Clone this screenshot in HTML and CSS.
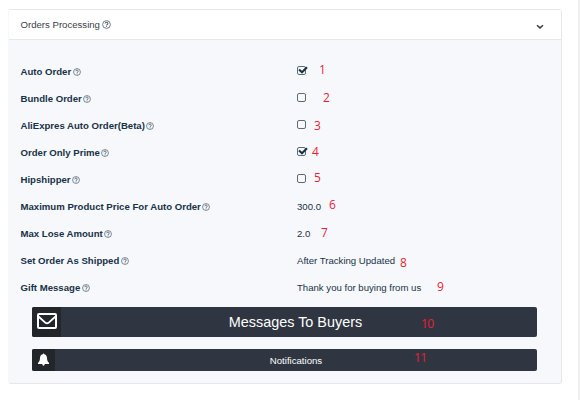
FILE: index.html
```html
<!DOCTYPE html>
<html lang="en">
<head>
    <meta charset="UTF-8">
    <meta name="viewport" content="width=device-width, initial-scale=1.0">
    <title>Orders Processing</title>
    <link rel="stylesheet" href="styles.css">
</head>
<body>
    <svg width="0" height="0" class="sprite">
        <symbol id="help" viewBox="0 0 16 16">
            <circle cx="8" cy="8" r="6.9" fill="none" stroke="currentColor" stroke-width="1.4"/>
            <path d="M5.5 6.4C5.6 3.4 10.5 3.4 10.5 6.3C10.5 8 8.1 8 8.1 9.8M8.1 11V12.6" fill="none" stroke="currentColor" stroke-width="1.8"/>
        </symbol>
    </svg>

    <main class="page">
        <section class="panel">
            <header class="panel-header">
                <h1 class="panel-title">Orders Processing</h1>
                <svg class="help help-large"><use href="#help"/></svg>
                <svg class="chevron" viewBox="0 0 8 6"><path d="M1 1.2L4 3.9L7 1.2" fill="none" stroke="currentColor" stroke-width="1.5"/></svg>
            </header>

            <div class="panel-body">
                <div class="row">
                    <div class="label"><span>Auto Order</span><svg class="help"><use href="#help"/></svg></div>
                    <div class="value"><span class="checkbox"><svg class="tick" viewBox="0 0 10 8"><path d="M1 3.5L4 6.2L9 1.2" fill="none" stroke="currentColor" stroke-width="2.1"/></svg></span></div>
                </div>
                <div class="row">
                    <div class="label"><span>Bundle Order</span><svg class="help"><use href="#help"/></svg></div>
                    <div class="value"><span class="checkbox"></span></div>
                </div>
                <div class="row">
                    <div class="label"><span>AliExpres Auto Order(Beta)</span><svg class="help"><use href="#help"/></svg></div>
                    <div class="value"><span class="checkbox"></span></div>
                </div>
                <div class="row">
                    <div class="label"><span>Order Only Prime</span><svg class="help"><use href="#help"/></svg></div>
                    <div class="value"><span class="checkbox"><svg class="tick" viewBox="0 0 10 8"><path d="M1 3.5L4 6.2L9 1.2" fill="none" stroke="currentColor" stroke-width="2.1"/></svg></span></div>
                </div>
                <div class="row">
                    <div class="label"><span>Hipshipper</span><svg class="help"><use href="#help"/></svg></div>
                    <div class="value"><span class="checkbox"></span></div>
                </div>
                <div class="row">
                    <div class="label"><span>Maximum Product Price For Auto Order</span><svg class="help"><use href="#help"/></svg></div>
                    <div class="value">300.0</div>
                </div>
                <div class="row">
                    <div class="label"><span>Max Lose Amount</span><svg class="help"><use href="#help"/></svg></div>
                    <div class="value">2.0</div>
                </div>
                <div class="row">
                    <div class="label"><span>Set Order As Shipped</span><svg class="help"><use href="#help"/></svg></div>
                    <div class="value">After Tracking Updated</div>
                </div>
                <div class="row">
                    <div class="label"><span>Gift Message</span><svg class="help"><use href="#help"/></svg></div>
                    <div class="value">Thank you for buying from us</div>
                </div>

                <button class="bar bar-messages">
                    <span class="bar-icon"><svg width="20" height="16" viewBox="0 0 20 16"><rect x="1" y="1" width="18" height="14" rx="1" fill="none" stroke="#fff" stroke-width="2"/><path d="M1.5 3.5L8.5 9.8Q10 11 11.5 9.8L18.5 3.5" fill="none" stroke="#fff" stroke-width="1.8"/></svg></span>
                    <span class="bar-text">Messages To Buyers</span>
                </button>
                <button class="bar bar-notifications">
                    <span class="bar-icon"><svg width="11" height="13" viewBox="0 0 11 13"><path d="M5.5 0.2L6.3 1.2C8.4 1.7 8.9 3.2 9 5C9.1 7.4 9.7 8.8 11 9.7V10.9H0V9.7C1.3 8.8 1.9 7.4 2 5C2.1 3.2 2.6 1.7 4.7 1.2ZM4.2 10.9H6.8Q6.6 12.7 5.5 12.7Q4.4 12.7 4.2 10.9Z" fill="#fff"/></svg></span>
                    <span class="bar-text">Notifications</span>
                </button>
            </div>
        </section>
    </main>

    <div class="marks">
        <span class="mark mark-1">1</span>
        <span class="mark mark-2">2</span>
        <span class="mark mark-3">3</span>
        <span class="mark mark-4">4</span>
        <span class="mark mark-5">5</span>
        <span class="mark mark-6">6</span>
        <span class="mark mark-7">7</span>
        <span class="mark mark-8">8</span>
        <span class="mark mark-9">9</span>
        <span class="mark mark-10">10</span>
        <span class="mark mark-11">11</span>
    </div>
</body>
</html>
```
FILE: styles.css
```css
* {
    box-sizing: border-box;
}

body {
    margin: 0;
    background-color: #fff;
    color: #183247;
    font-family: "Liberation Sans", Arial, sans-serif;
    font-size: 9.6px;
}

.sprite {
    display: block;
}

.page {
    width: 580px;
    height: 400px;
    padding: 9px 0 0 8px;
    border-right: 2px solid #f0f0f0;
}

.panel {
    width: 554px;
    height: 375px;
    border: 1px solid #e7e7e9;
    border-left-color: #f7f8fc;
    border-radius: 3px;
    background-color: #f7f8fc;
}

.panel-header {
    display: flex;
    align-items: center;
    height: 30px;
    padding: 0 17.5px 0 11.5px;
    border-bottom: 1px solid #e7e7e9;
    background-color: #fff;
    color: #3a4046;
}

.panel-title {
    margin: 0 2.5px 0 0;
    font-size: 9.6px;
    font-weight: normal;
}

.help {
    width: 8px;
    height: 8px;
    margin: 1px 0 0 1.5px;
    color: #4c5c68;
}

.help-large {
    width: 9px;
    height: 9px;
    margin: 0;
}

.chevron {
    width: 8px;
    height: 6px;
    margin: 4px 0 0 auto;
}

.panel-body {
    padding: 18px 24px 0 11.5px;
}

.row {
    display: flex;
    align-items: center;
    height: 27px;
}

.label {
    display: flex;
    align-items: center;
    width: 276.5px;
    font-weight: bold;
}

.checkbox {
    display: block;
    width: 9px;
    height: 9px;
    margin-top: -2px;
    border: 1px solid #5d6b78;
    border-radius: 2px;
}

.tick {
    display: block;
    width: 10px;
    height: 8px;
    margin-top: -1px;
}

.bar {
    display: flex;
    align-items: center;
    width: 505px;
    margin-left: 11.5px;
    padding: 0;
    border: none;
    border-radius: 2px;
    overflow: hidden;
    background-color: #303641;
    color: #fff;
    font-family: inherit;
}

.bar-icon {
    display: flex;
    align-items: center;
    justify-content: center;
    height: 100%;
    background-color: #22262b;
}

.bar-text {
    flex: 1;
    text-align: center;
}

.bar-messages {
    height: 30px;
    margin-top: 6px;
    padding-right: 7px;
    font-size: 14.4px;
}

.bar-messages .bar-icon {
    width: 29px;
    padding-bottom: 2px;
}

.bar-notifications {
    height: 22px;
    margin-top: 12px;
    font-size: 9.6px;
}

.bar-notifications .bar-icon {
    width: 23px;
    padding-bottom: 1px;
}

/* numbered callouts over the form */
.mark {
    position: absolute;
    color: #ed1c34;
    font-family: "Open Sans", sans-serif;
    font-size: 12px;
    line-height: 12px;
}

.mark-1 { left: 319px; top: 64px; }
.mark-2 { left: 323px; top: 92px; }
.mark-3 { left: 314px; top: 120px; }
.mark-4 { left: 312px; top: 146px; }
.mark-5 { left: 314px; top: 172px; }
.mark-6 { left: 329px; top: 199px; }
.mark-7 { left: 321px; top: 227px; }
.mark-8 { left: 400px; top: 257px; }
.mark-9 { left: 437px; top: 281px; }
.mark-10 { left: 421px; top: 318px; letter-spacing: -0.5px; }
.mark-11 { left: 414px; top: 352px; letter-spacing: -0.5px; }
```
